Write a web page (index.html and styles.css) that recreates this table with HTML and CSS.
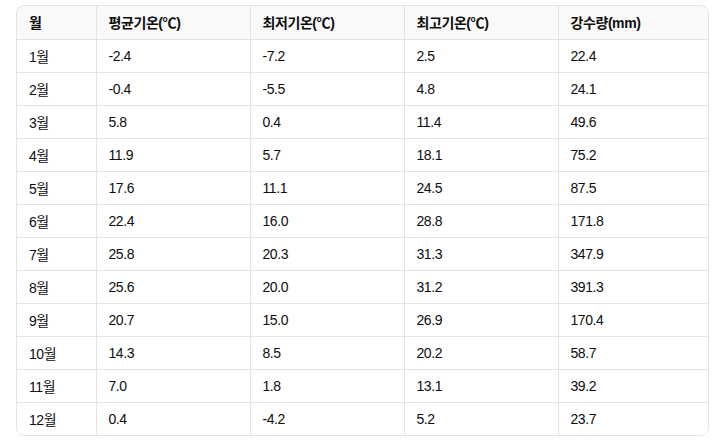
FILE: index.html
```html
<!DOCTYPE html>
<html lang="ko">
<head>
<meta charset="utf-8">
<link rel="stylesheet" href="styles.css">
</head>
<body>
<div class="wrap">
<table class="tbl">
<colgroup><col class="c1"><col class="c2"><col class="c2"><col class="c2"><col class="c5"></colgroup>
<thead>
<tr><th>월</th><th>평균기온(℃)</th><th>최저기온(℃)</th><th>최고기온(℃)</th><th>강수량(mm)</th></tr>
</thead>
<tbody>
<tr><td>1월</td><td>-2.4</td><td>-7.2</td><td>2.5</td><td>22.4</td></tr>
<tr><td>2월</td><td>-0.4</td><td>-5.5</td><td>4.8</td><td>24.1</td></tr>
<tr><td>3월</td><td>5.8</td><td>0.4</td><td>11.4</td><td>49.6</td></tr>
<tr><td>4월</td><td>11.9</td><td>5.7</td><td>18.1</td><td>75.2</td></tr>
<tr><td>5월</td><td>17.6</td><td>11.1</td><td>24.5</td><td>87.5</td></tr>
<tr><td>6월</td><td>22.4</td><td>16.0</td><td>28.8</td><td>171.8</td></tr>
<tr><td>7월</td><td>25.8</td><td>20.3</td><td>31.3</td><td>347.9</td></tr>
<tr><td>8월</td><td>25.6</td><td>20.0</td><td>31.2</td><td>391.3</td></tr>
<tr><td>9월</td><td>20.7</td><td>15.0</td><td>26.9</td><td>170.4</td></tr>
<tr><td>10월</td><td>14.3</td><td>8.5</td><td>20.2</td><td>58.7</td></tr>
<tr><td>11월</td><td>7.0</td><td>1.8</td><td>13.1</td><td>39.2</td></tr>
<tr><td>12월</td><td>0.4</td><td>-4.2</td><td>5.2</td><td>23.7</td></tr>
</tbody>
</table>
</div>
</body>
</html>
```
FILE: styles.css
```css
html, body { margin: 0; padding: 0; background: #fff; }
body { padding: 5px 0 0 16px; font-family: "Liberation Sans", Arial, "Noto Sans CJK KR", sans-serif; color: #0d0d0d; }
.wrap {
  width: 691px;
  border: 1px solid #e3e3e3;
  border-radius: 8px;
  overflow: hidden;
}
.tbl {
  width: 100%;
  border-collapse: collapse;
  table-layout: fixed;
  font-size: 14px;
  letter-spacing: -0.03em;
}
.c1 { width: 79px; }
.c2 { width: 154px; }
.c5 { width: auto; }
th, td {
  height: 33px;
  box-sizing: border-box;
  padding: 0 12px;
  text-align: left;
  border-right: 1px solid #e3e3e3;
  border-bottom: 1px solid #e3e3e3;
  white-space: nowrap;
}
th:last-child, td:last-child { border-right: 0; }
tbody tr:last-child td { border-bottom: 0; }
th { background: #f9f9f9; font-weight: 600; }
td { font-weight: 400; }
```
